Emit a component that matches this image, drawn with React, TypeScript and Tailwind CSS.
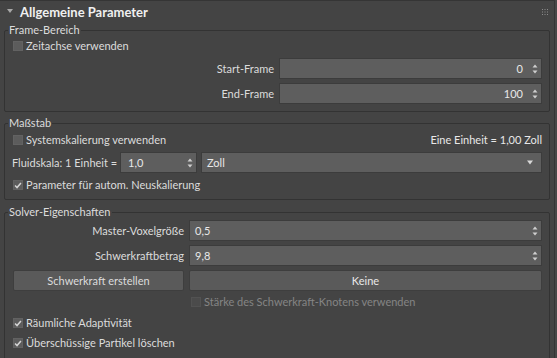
import React from "react";

function Spinner() {
  return (
    <svg width="6" height="10" viewBox="0 0 6 10" className="shrink-0">
      <path d="M3 0.5 L5.5 3.5 L0.5 3.5 Z" fill="#cfcfcf" />
      <path d="M0.5 6.5 L5.5 6.5 L3 9.5 Z" fill="#cfcfcf" />
    </svg>
  );
}

function Check({ checked, disabled, label }: { checked?: boolean; disabled?: boolean; label: string }) {
  return (
    <div className="flex items-center h-[18px]">
      <div
        className={
          "w-[10px] h-[10px] shrink-0 flex items-center justify-center border " +
          (disabled ? "bg-[#4b4b4b] border-[#525252]" : "bg-[#5c5c5c] border-[#626262]")
        }
      >
        {checked && (
          <svg width="9" height="9" viewBox="0 0 9 9">
            <path d="M1.2 4.6 L3.4 6.8 L7.8 1.6" stroke="#d4d4d4" strokeWidth="1.7" fill="none" />
          </svg>
        )}
      </div>
      <span className={"ml-[3px] whitespace-nowrap " + (disabled ? "text-[#858585]" : "text-[#dcdcdc]")}>{label}</span>
    </div>
  );
}

function NumInput({ value, right, className }: { value: string; right?: boolean; className: string }) {
  return (
    <div
      className={
        "h-[21px] shrink-0 bg-[#5e5e5e] border border-[#3c3c3c] flex items-center pr-[3px] " + className
      }
    >
      <span className={"flex-1 text-[#e8e8e8] " + (right ? "text-right pr-[9px]" : "pl-[5px]")}>{value}</span>
      <Spinner />
    </div>
  );
}

function Group({ title, children, className }: { title: string; children: React.ReactNode; className?: string }) {
  return (
    <fieldset className={"mx-[4px] border border-[#333333] rounded-[2px] " + (className ?? "")}>
      <legend className="ml-[3px] px-[1px] leading-[14px] text-[#dcdcdc]">{title}</legend>
      {children}
    </fieldset>
  );
}

export default function App() {
  return (
    <div className="w-[557px] h-[358px] overflow-hidden bg-[#474747] font-['Lato',sans-serif] text-[11px] leading-[14px]">
      <div className="w-[555px] h-[358px] bg-[#444444] border-t border-r border-[#353535]">
        <div className="h-[21px] flex items-center pl-[7px] pr-[6px]">
          <svg width="6" height="5" viewBox="0 0 6 5" className="mt-[-1px]">
            <path d="M0 0 L6 0 L3 4 Z" fill="#a8a8a8" />
          </svg>
          <span className="ml-[7px] font-bold text-[13px] text-[#f0f0f0] flex-1">Allgemeine Parameter</span>
          <svg width="6" height="6" viewBox="0 0 6 6">
            {[0, 2.5, 5].map((x) =>
              [0, 2.5, 5].map((y) => <rect key={x + "-" + y} x={x} y={y} width="1" height="1" fill="#8c8c8c" />)
            )}
          </svg>
        </div>

        <Group title="Frame-Bereich" className="mt-[1px]">
          <div className="pl-[8px] pr-[7px] pb-[7px] flex flex-col">
            <Check label="Zeitachse verwenden" />
            <div className="flex items-center mt-[3px] gap-[5px]">
              <span className="flex-1 text-right text-[#dcdcdc] whitespace-nowrap">Start-Frame</span>
              <NumInput value="0" right className="w-[263px]" />
            </div>
            <div className="flex items-center mt-[4px] gap-[5px]">
              <span className="flex-1 text-right text-[#dcdcdc] whitespace-nowrap">End-Frame</span>
              <NumInput value="100" right className="w-[263px]" />
            </div>
          </div>
        </Group>

        <Group title="Maßstab" className="mt-[4px]">
          <div className="pl-[8px] pr-[7px] pb-[5px] flex flex-col">
            <div className="flex items-center justify-between mt-[1px]">
              <Check label="Systemskalierung verwenden" />
              <span className="text-[#e8e8e8] whitespace-nowrap">Eine Einheit = 1,00 Zoll</span>
            </div>
            <div className="flex items-center mt-[3px]">
              <span className="flex-1 text-[#dcdcdc] ml-[-1px] whitespace-nowrap">Fluidskala: 1 Einheit =</span>
              <NumInput value="1,0" className="w-[77px] pl-[2px]" />
              <div className="ml-[4px] w-[341px] shrink-0 h-[21px] bg-[#5e5e5e] border border-[#3c3c3c] flex items-center pl-[5px] pr-[8px]">
                <span className="flex-1 text-[#e8e8e8]">Zoll</span>
                <svg width="6" height="5" viewBox="0 0 6 5">
                  <path d="M0 0.5 L6 0.5 L3 4.5 Z" fill="#d8d8d8" />
                </svg>
              </div>
            </div>
            <div className="mt-[3px]">
              <Check checked label="Parameter für autom. Neuskalierung" />
            </div>
          </div>
        </Group>

        <Group title="Solver-Eigenschaften" className="mt-[5px]">
          <div className="pl-[8px] pr-[7px] pb-[8px] flex flex-col">
            <div className="flex items-center mt-[1px] gap-[5px]">
              <span className="flex-1 text-right text-[#dcdcdc] whitespace-nowrap">Master-Voxelgröße</span>
              <NumInput value="0,5" className="w-[353px]" />
            </div>
            <div className="flex items-center mt-[4px] gap-[5px]">
              <span className="flex-1 text-right text-[#dcdcdc] whitespace-nowrap">Schwerkraftbetrag</span>
              <NumInput value="9,8" className="w-[353px]" />
            </div>
            <div className="flex items-center mt-[4px] gap-[5px]">
              <div className="flex-1 h-[21px] rounded-[2px] bg-[#5a5a5a] border border-[#3e3e3e] flex items-center justify-center text-[#dcdcdc] whitespace-nowrap">
                Schwerkraft erstellen
              </div>
              <div className="w-[353px] shrink-0 h-[21px] rounded-[2px] bg-[#5a5a5a] border border-[#3e3e3e] flex items-center justify-center text-[#e8e8e8]">
                Keine
              </div>
            </div>
            <div className="flex mt-[2px] pl-[178px]">
              <Check disabled label="Stärke des Schwerkraft-Knotens verwenden" />
            </div>
            <div className="mt-[3px]">
              <Check checked label="Räumliche Adaptivität" />
            </div>
            <div className="mt-[2px]">
              <Check checked label="Überschüssige Partikel löschen" />
            </div>
          </div>
        </Group>
      </div>
    </div>
  );
}
